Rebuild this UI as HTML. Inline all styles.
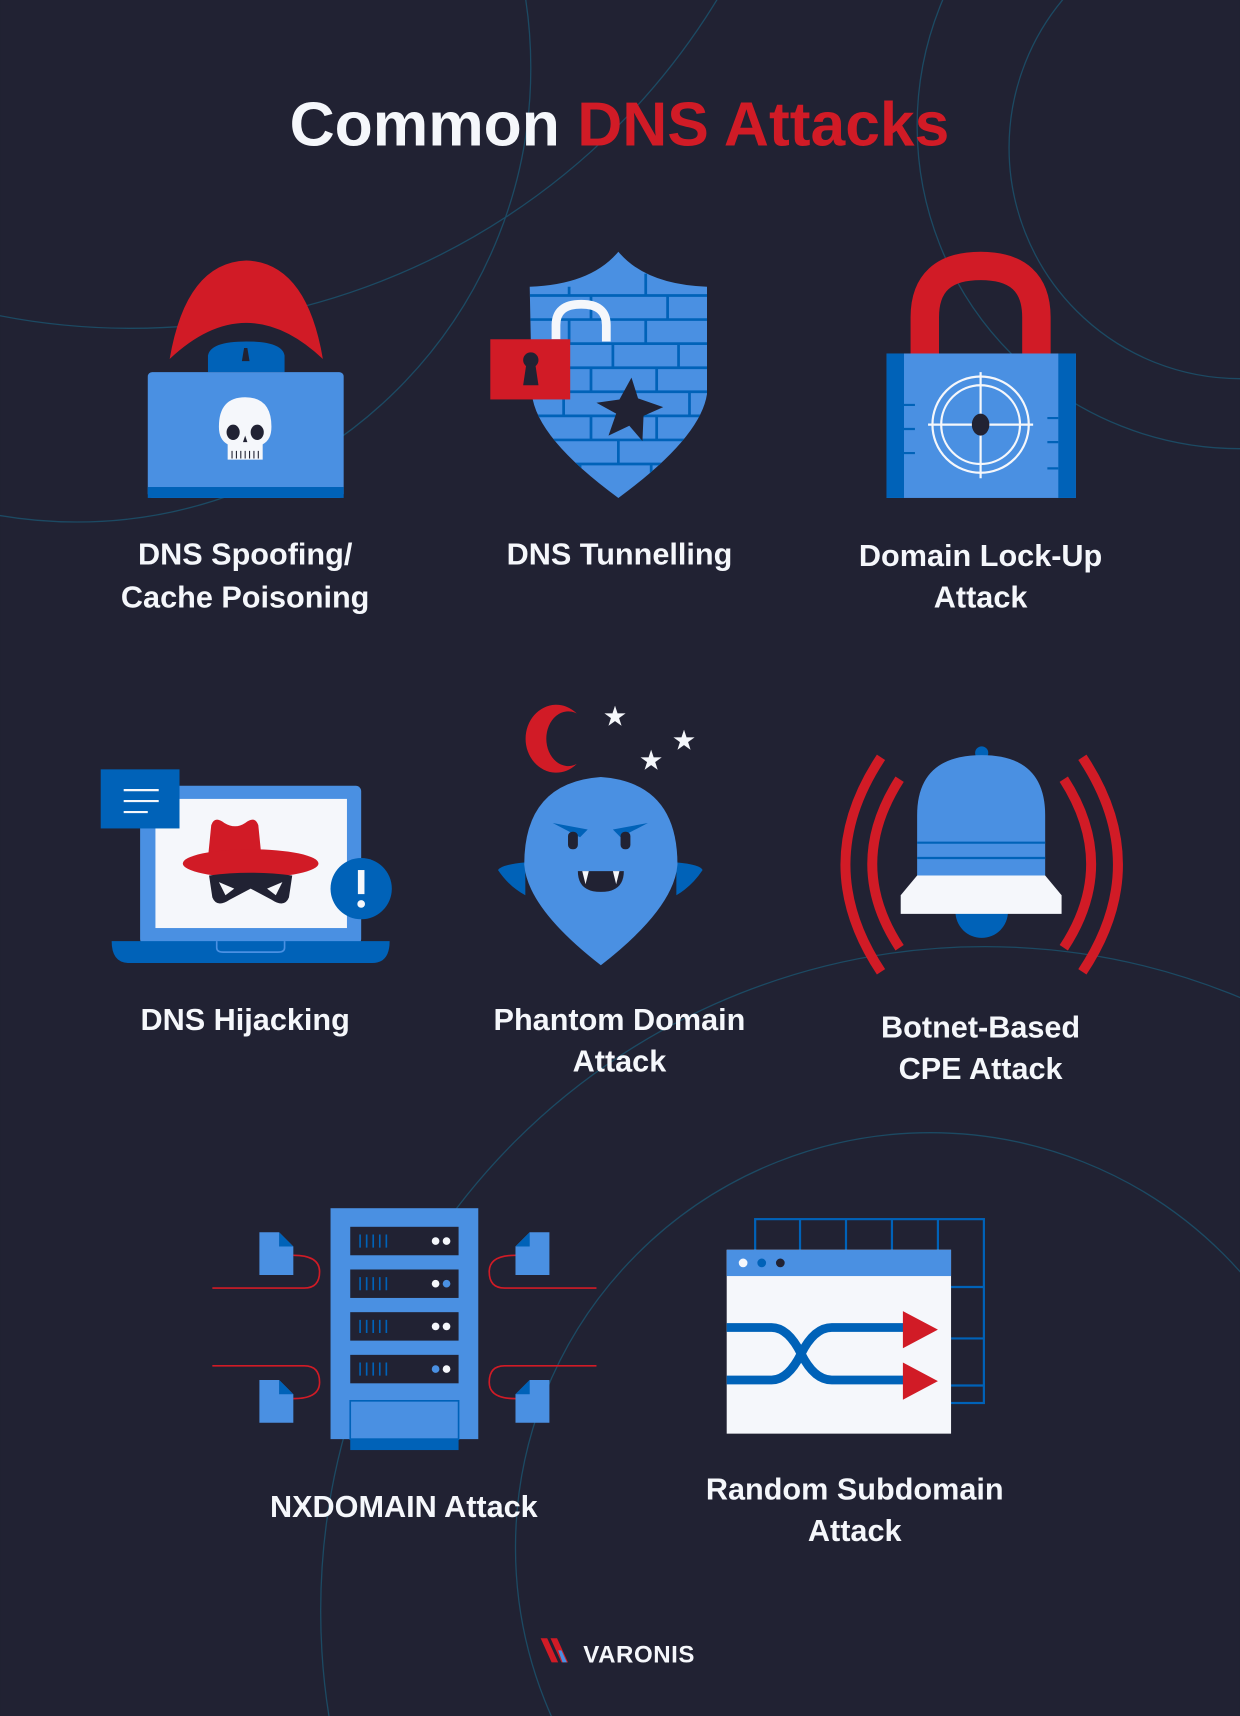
<!DOCTYPE html>
<html><head><meta charset="utf-8"><style>
html,body{margin:0;padding:0;background:#212233;width:1240px;height:1716px;overflow:hidden}
svg{display:block}
text{font-family:"Liberation Sans",sans-serif;fill:#f5f7fb;text-anchor:middle;font-weight:bold}
.l{font-size:28px}
</style></head><body>
<svg width="1240" height="1716" viewBox="0 0 1133 1568" xmlns="http://www.w3.org/2000/svg">
<defs><clipPath id="sh"><path d="M484 262 Q540 260 565 230 Q590 260 646 262 L646 360 Q640 400 565 455 Q490 400 486 360Z"/></clipPath></defs>
<rect width="1133" height="1568" fill="#212233"/>
<g fill="none" stroke="#1c4a63" stroke-width="1.2">
<circle cx="1133" cy="135" r="211"/>
<circle cx="1133" cy="115" r="295"/>
<circle cx="70" cy="62" r="415"/>
<circle cx="120" cy="-327" r="627"/>
<circle cx="900" cy="1472" r="607"/>
<circle cx="850" cy="1414" r="379"/>
</g>
<text x="566" y="133" style="font-size:57px;font-weight:bold">Common <tspan fill="#d11b26">DNS Attacks</tspan></text>

<!-- hacker -->
<path d="M155 328 Q170 240 225 238 Q280 240 295 328 Q260 295 225 295 Q190 295 155 328Z" fill="#d11b26"/>
<path d="M190 340 L190 325 Q192 312 225 312 Q258 312 260 325 L260 340Z" fill="#0062b8"/>
<path d="M221 330 L223 318 L226 318 L228 330Z" fill="#212233"/>
<rect x="135" y="340" width="179" height="115" rx="4" fill="#4a90e2"/>
<rect x="135" y="445" width="179" height="10" fill="#0062b8"/>
<path d="M224 363 Q248 363 248 390 Q248 402 240 406 L240 420 L208 420 L208 406 Q200 402 200 390 Q200 363 224 363Z" fill="#f5f7fb"/>
<ellipse cx="213" cy="395" rx="6" ry="7" fill="#212233"/><ellipse cx="235" cy="395" rx="6" ry="7" fill="#212233"/>
<path d="M222 404 L224 398 L226 404Z" fill="#212233"/>
<path d="M212 412v7M216 412v7M220 412v7M224 412v7M228 412v7M232 412v7M236 412v7" stroke="#212233" stroke-width="1"/>
<text class="l" x="224" y="516">DNS Spoofing/</text><text class="l" x="224" y="555">Cache Poisoning</text>

<!-- shield -->
<path d="M484 262 Q540 260 565 230 Q590 260 646 262 L646 360 Q640 400 565 455 Q490 400 486 360Z" fill="#4a90e2"/>
<g stroke="#0062b8" stroke-width="2.5" fill="none" clip-path="url(#sh)">
<path d="M484 270H646M484 292H646M484 314H646M484 336H646M484 358H646M484 380H646M484 402H646M484 424H646"/>
<path d="M520 262V270M590 250V270M540 270V292M610 270V292M520 292V314M590 292V314M560 314V336M620 314V336M540 336V358M600 336V358M515 358V380M575 358V380M630 358V380M540 380V402M600 380V402M565 402V424M530 424V446M595 424V446"/>
</g>
<path d="M508 310 L508 297 Q508 278 531 278 Q554 278 554 297 L554 312" stroke="#f5f7fb" stroke-width="8" fill="none"/>
<rect x="448" y="310" width="73" height="55" fill="#d11b26"/>
<circle cx="485" cy="329" r="7" fill="#212233"/><path d="M481 332 L478 352 L492 352 L489 332Z" fill="#212233"/>
<path d="M577 345 L583 364 L606 372 L588 380 L587 403 L575 389 L556 398 L563 378 L545 368 L566 365Z" fill="#212233"/>
<text class="l" x="566" y="516">DNS Tunnelling</text>

<!-- lock -->
<path d="M845 323 L845 290 Q845 243 896 243 Q947 243 947 290 L947 323" stroke="#d11b26" stroke-width="26" fill="none"/>
<rect x="810" y="323" width="173" height="132" fill="#4a90e2"/>
<rect x="810" y="323" width="16" height="132" fill="#0062b8"/><rect x="967" y="323" width="16" height="132" fill="#0062b8"/>
<g stroke="#0062b8" stroke-width="2"><path d="M826 370h10M826 392h10M826 414h10M957 382h10M957 404h10M957 428h10"/></g>
<g stroke="#f5f7fb" stroke-width="2" fill="none"><circle cx="896" cy="388" r="44"/><circle cx="896" cy="388" r="36"/><path d="M896 340V437M848 388H944"/></g>
<ellipse cx="896" cy="388" rx="8" ry="10" fill="#212233"/>
<text class="l" x="896" y="517">Domain Lock-Up</text><text class="l" x="896" y="555">Attack</text>

<!-- hijack laptop -->
<rect x="128" y="718" width="202" height="145" rx="5" fill="#4a90e2"/>
<rect x="142" y="730" width="175" height="118" fill="#f5f7fb"/>
<path d="M102 860 H356 Q356 880 340 880 H118 Q102 880 102 860Z" fill="#0062b8"/>
<path d="M198 860 V866 Q198 870 204 870 H254 Q260 870 260 866 V860" stroke="#4a90e2" stroke-width="1.5" fill="none"/>
<rect x="92" y="703" width="72" height="54" fill="#0062b8"/>
<path d="M113 722h32M113 732h32M113 742h22" stroke="#f5f7fb" stroke-width="2"/>
<path d="M190 784 L193 754 Q196 745 205 752 Q215 758 224 752 Q233 745 236 754 L239 784Z" fill="#d11b26"/>
<ellipse cx="229" cy="789" rx="62" ry="13" fill="#d11b26"/>
<path d="M191 800 Q229 795 267 800 L264 820 Q260 830 248 822 L229 812 L210 822 Q198 830 194 820Z" fill="#212233"/>
<path d="M200 806 L214 812 L206 818Z M258 806 L244 812 L252 818Z" fill="#f5f7fb"/>
<circle cx="330" cy="812" r="28" fill="#0062b8"/>
<rect x="327" y="795" width="6" height="22" fill="#f5f7fb"/><circle cx="330" cy="826" r="3.5" fill="#f5f7fb"/>
<text class="l" x="224" y="941">DNS Hijacking</text>

<!-- ghost -->
<path d="M527 652 A28 31 0 1 0 527 698 A20 25 0 1 1 527 652Z" fill="#d11b26"/>
<g fill="#f5f7fb" font-size="22"><text x="562" y="662">★</text><text x="625" y="684">★</text><text x="595" y="702">★</text></g>
<path d="M480 788 Q458 790 455 795 Q465 810 480 818Z M618 788 Q640 790 642 795 Q632 810 618 818Z" fill="#0062b8"/>
<path d="M549 710 Q479 715 479 790 Q482 830 549 882 Q616 830 619 790 Q619 715 549 710Z" fill="#4a90e2"/>
<path d="M505 752 L537 758 L530 765Z M592 752 L560 758 L567 765Z" fill="#0062b8"/>
<rect x="519" y="760" width="9" height="16" rx="4" fill="#212233"/><rect x="567" y="760" width="9" height="16" rx="4" fill="#212233"/>
<path d="M528 796 H570 Q570 815 549 815 Q528 815 528 796Z" fill="#212233"/>
<path d="M532 796 L535 808 L538 796Z M560 796 L563 808 L566 796Z" fill="#f5f7fb"/>
<text class="l" x="566" y="941">Phantom Domain</text><text class="l" x="566" y="979">Attack</text>

<!-- bell -->
<circle cx="897" cy="688" r="6" fill="#0062b8"/>
<path d="M873 833 A24 24 0 0 0 921 833Z" fill="#0062b8"/>
<path d="M838 800 V745 Q838 690 897 690 Q955 690 955 745 V800Z" fill="#4a90e2"/>
<path d="M838 770H955M838 784H955" stroke="#0062b8" stroke-width="2"/>
<path d="M838 800 H955 L970 818 V835 H823 V818Z" fill="#f5f7fb"/>
<g stroke="#d11b26" stroke-width="9" fill="none">
<path d="M805 692 Q740 790 805 888"/><path d="M822 712 Q772 790 822 866"/>
<path d="M989 692 Q1054 790 989 888"/><path d="M972 712 Q1022 790 972 866"/>
</g>
<text class="l" x="896" y="948">Botnet-Based</text><text class="l" x="896" y="986">CPE Attack</text>

<!-- server -->
<rect x="320" y="1300" width="99" height="25" fill="#0062b8"/>
<rect x="302" y="1104" width="135" height="211" fill="#4a90e2"/>
<rect x="320" y="1280" width="99" height="35" fill="none" stroke="#0062b8" stroke-width="1.5"/>
<g>
<rect x="320" y="1121" width="99" height="26" fill="#212233"/><rect x="320" y="1160" width="99" height="26" fill="#212233"/>
<rect x="320" y="1199" width="99" height="26" fill="#212233"/><rect x="320" y="1238" width="99" height="26" fill="#212233"/>
<g stroke="#0062b8" stroke-width="1.5"><path d="M329 1128v12M335 1128v12M341 1128v12M347 1128v12M353 1128v12M329 1167v12M335 1167v12M341 1167v12M347 1167v12M353 1167v12M329 1206v12M335 1206v12M341 1206v12M347 1206v12M353 1206v12M329 1245v12M335 1245v12M341 1245v12M347 1245v12M353 1245v12"/></g>
<g fill="#f5f7fb"><circle cx="398" cy="1134" r="3.5"/><circle cx="408" cy="1134" r="3.5"/><circle cx="398" cy="1173" r="3.5"/><circle cx="398" cy="1212" r="3.5"/><circle cx="408" cy="1212" r="3.5"/><circle cx="408" cy="1251" r="3.5"/></g>
<g fill="#4a90e2"><circle cx="408" cy="1173" r="3.5"/><circle cx="398" cy="1251" r="3.5"/></g>
</g>
<g stroke="#d11b26" stroke-width="1.5" fill="none">
<path d="M194 1177 H278 Q292 1177 292 1162 Q292 1147 268 1147"/>
<path d="M194 1248 H278 Q292 1248 292 1263 Q292 1278 268 1278"/>
<path d="M545 1177 H461 Q447 1177 447 1162 Q447 1147 471 1147"/>
<path d="M545 1248 H461 Q447 1248 447 1263 Q447 1278 471 1278"/>
</g>
<g fill="#4a90e2">
<path d="M237 1126 H255 L268 1139 V1165 H237Z"/><path d="M237 1261 H255 L268 1274 V1300 H237Z"/>
<path d="M502 1126 H484 L471 1139 V1165 H502Z"/><path d="M502 1261 H484 L471 1274 V1300 H502Z"/>
</g>
<g fill="#0062b8"><path d="M255 1126 L268 1139 H255Z M255 1261 L268 1274 H255Z M484 1126 L471 1139 H484Z M484 1261 L471 1274 H484Z"/></g>
<text class="l" x="369" y="1386">NXDOMAIN Attack</text>

<!-- browser -->
<g stroke="#0062b8" stroke-width="2" fill="none">
<rect x="690" y="1114" width="209" height="168"/>
<path d="M731 1114V1142M773 1114V1142M815 1114V1142M857 1114V1282M869 1176H899M869 1223H899M869 1266H899"/>
</g>
<rect x="664" y="1142" width="205" height="168" fill="#f5f7fb"/>
<rect x="664" y="1142" width="205" height="24" fill="#4a90e2"/>
<circle cx="679" cy="1154" r="4" fill="#f5f7fb"/><circle cx="696" cy="1154" r="4" fill="#0062b8"/><circle cx="713" cy="1154" r="4" fill="#212233"/>
<g stroke="#0062b8" stroke-width="8" fill="none">
<path d="M664 1213 H705 Q720 1213 732 1237 Q744 1261 760 1261 H828"/>
<path d="M664 1261 H705 Q720 1261 732 1237 Q744 1213 760 1213 H828"/>
</g>
<path d="M825 1198 L857 1215 L825 1232Z M825 1245 L857 1262 L825 1279Z" fill="#d11b26"/>
<text class="l" x="781" y="1370">Random Subdomain</text><text class="l" x="781" y="1408">Attack</text>

<!-- logo -->
<path d="M494 1497 L500 1497 L510 1519 L504 1519Z M503 1497 L509 1497 L519 1519 L513 1519Z" fill="#d11b26"/>
<path d="M510 1508 L513 1508 L518 1519 L514 1519Z" fill="#4a90e2"/>
<text x="584" y="1519" style="font-size:22px;font-weight:bold;letter-spacing:0.5px">VARONIS</text>
</svg>
</body></html>
